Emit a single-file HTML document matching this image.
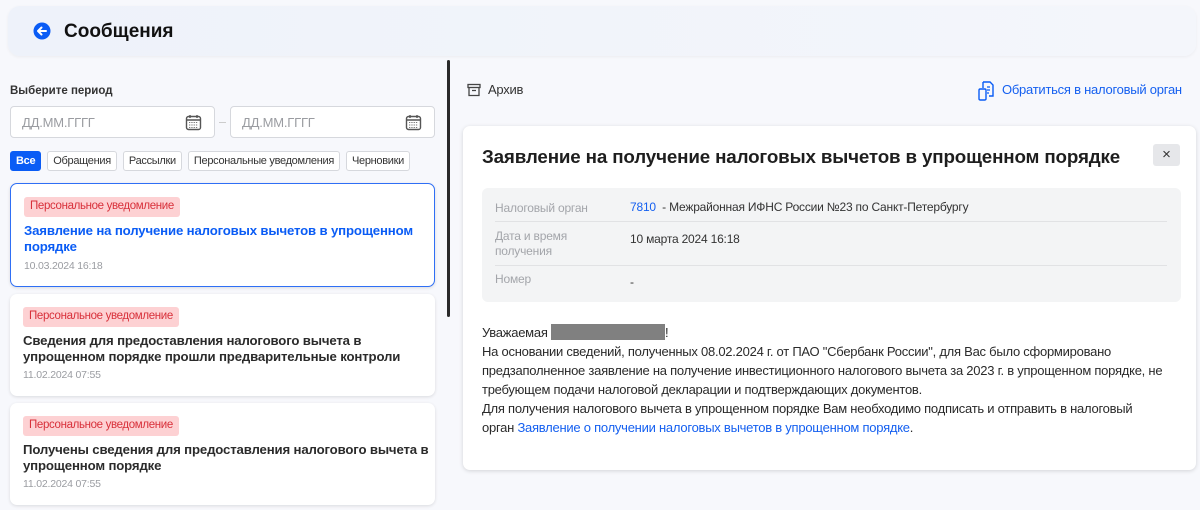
<!DOCTYPE html>
<html><head><meta charset="utf-8"><style>
*{box-sizing:border-box;margin:0;padding:0}
body{width:1200px;height:510px;overflow:hidden;background:#f7f8fc;font-family:"Liberation Sans",sans-serif;position:relative;color:#222}
.a{position:absolute;white-space:nowrap}
.hdr{left:8px;top:6px;width:1188px;height:50px;background:linear-gradient(90deg,#eef2fa,#f4f6fb);border-radius:12px;box-shadow:0 1px 3px rgba(0,0,0,.05)}
.inp{height:32px;width:205px;border:1px solid #d6d8dd;border-radius:4px;background:#fff;top:106px}
.inp span{position:absolute;left:11px;top:8px;font-size:13px;color:#9a9ca1;letter-spacing:-.2px}
.chips{left:10px;top:151px;display:flex;gap:6px}
.chip{height:20px;border:1px solid #d6d8dd;border-radius:3px;background:#fff;font-size:11px;color:#333;padding:3px 5px;letter-spacing:-.3px;white-space:nowrap}
.card{left:10px;width:425px;background:#fff;border-radius:7px;box-shadow:0 1px 3px rgba(0,0,0,.12)}
.tag{position:absolute;left:13px;top:13px;height:20px;background:#fdd1d3;color:#d8303a;font-size:11.5px;padding:3px 6px;border-radius:3px;letter-spacing:-.35px;white-space:nowrap}
.ct{position:absolute;left:13px;top:39px;font-size:13.2px;font-weight:bold;line-height:16px;color:#2b2b2b;letter-spacing:-.15px;white-space:nowrap}
.cd{position:absolute;left:13px;font-size:10.5px;color:#9a9ca1;letter-spacing:-.2px}
.t13{font-size:13px;letter-spacing:-.25px;color:#2a2a2a}
.lbl{font-size:12px;color:#a3a5aa;letter-spacing:-.2px}
</style></head><body>
<div class="a hdr"></div>
<svg class="a" style="left:33px;top:22px" width="18" height="18" viewBox="0 0 18 18"><circle cx="9" cy="9" r="8.5" fill="#0a5cf5"/><path d="M13 9H5.5M8.5 5.5L5 9l3.5 3.5" stroke="#fff" stroke-width="2" fill="none" stroke-linecap="round" stroke-linejoin="round"/></svg>
<div class="a" style="left:64px;top:21px;font-size:19px;font-weight:bold;color:#111">Сообщения</div>

<div class="a" style="left:10px;top:85px;font-size:11.5px;font-weight:bold;color:#333">Выберите период</div>
<div class="a inp" style="left:10px"><span>ДД.ММ.ГГГГ</span>
<svg style="position:absolute;right:12px;top:7px" width="17" height="17" viewBox="0 0 17 17"><rect x="1.5" y="2.5" width="14" height="13" rx="2" fill="none" stroke="#555" stroke-width="1.4"/><path d="M1.5 6h14M5 1v3M12 1v3" stroke="#555" stroke-width="1.4"/><path d="M4 8.5h9M4 11h9M4 13.5h9" stroke="#777" stroke-width="1" stroke-dasharray="1.3 1"/></svg></div>
<div class="a" style="left:219px;top:122px;width:7px;height:1px;background:#ccc"></div>
<div class="a inp" style="left:230px"><span>ДД.ММ.ГГГГ</span>
<svg style="position:absolute;right:12px;top:7px" width="17" height="17" viewBox="0 0 17 17"><rect x="1.5" y="2.5" width="14" height="13" rx="2" fill="none" stroke="#555" stroke-width="1.4"/><path d="M1.5 6h14M5 1v3M12 1v3" stroke="#555" stroke-width="1.4"/><path d="M4 8.5h9M4 11h9M4 13.5h9" stroke="#777" stroke-width="1" stroke-dasharray="1.3 1"/></svg></div>

<div class="a chips">
<div class="chip" style="background:#0a5cf5;border-color:#0a5cf5;color:#fff;font-weight:bold">Все</div>
<div class="chip">Обращения</div>
<div class="chip">Рассылки</div>
<div class="chip">Персональные уведомления</div>
<div class="chip">Черновики</div>
</div>

<div class="a card" style="top:183px;height:104px;border:1.5px solid #2f6ff5">
<div class="tag">Персональное уведомление</div>
<div class="ct" style="color:#0a5cf5">Заявление на получение налоговых вычетов в упрощенном<br>порядке</div>
<div class="cd" style="top:76px">10.03.2024 16:18</div></div>
<div class="a card" style="top:294px;height:102px">
<div class="tag">Персональное уведомление</div>
<div class="ct">Сведения для предоставления налогового вычета в<br>упрощенном порядке прошли предварительные контроли</div>
<div class="cd" style="top:75px">11.02.2024 07:55</div></div>
<div class="a card" style="top:403px;height:102px">
<div class="tag">Персональное уведомление</div>
<div class="ct">Получены сведения для предоставления налогового вычета в<br>упрощенном порядке</div>
<div class="cd" style="top:75px">11.02.2024 07:55</div></div>

<div class="a" style="left:447px;top:60px;width:3px;height:257px;background:#2a2a2a;border-radius:2px"></div>

<svg class="a" style="left:467px;top:83px" width="14" height="14" viewBox="0 0 14 14"><rect x="1" y="1.5" width="12" height="3" fill="none" stroke="#444" stroke-width="1.3"/><path d="M2 4.5v8h10v-8M5 7.5h4" stroke="#444" stroke-width="1.3" fill="none"/></svg>
<div class="a t13" style="left:488px;top:82px;color:#333">Архив</div>
<svg class="a" style="left:977px;top:81px" width="18" height="20" viewBox="0 0 18 20"><path d="M6 1h7l3 3v11h-4M6 1v6" stroke="#0a5cf5" stroke-width="1.4" fill="none"/><rect x="2" y="8" width="7" height="11" rx="1.2" fill="none" stroke="#0a5cf5" stroke-width="1.4"/><path d="M10 6h3M10 9h3M10 12h2" stroke="#0a5cf5" stroke-width="1.2"/></svg>
<div class="a t13" style="left:1002px;top:82px;color:#1560f0">Обратиться в налоговый орган</div>

<div class="a" style="left:463px;top:126px;width:733px;height:344px;background:#fff;border-radius:7px;box-shadow:0 1px 4px rgba(0,0,0,.15)"></div>
<div class="a" style="left:482px;top:146px;font-size:18.8px;font-weight:bold;color:#1e1e1e;letter-spacing:-.15px">Заявление на получение налоговых вычетов в упрощенном порядке</div>
<div class="a" style="left:1153px;top:144px;width:27px;height:22px;background:#e6e7ea;border-radius:3px;text-align:center;font-size:15px;line-height:21px;color:#333">×</div>

<div class="a" style="left:482px;top:188px;width:699px;height:114px;background:#f3f4f5;border-radius:6px"></div>
<div class="a" style="left:495px;top:221px;width:672px;height:1px;background:#e1e2e4"></div>
<div class="a" style="left:495px;top:265px;width:672px;height:1px;background:#e1e2e4"></div>
<div class="a lbl" style="left:495px;top:201px">Налоговый орган</div>
<div class="a" style="left:630px;top:200px;font-size:12px;letter-spacing:-.2px;color:#333"><span style="color:#1560f0">7810</span>&nbsp; - Межрайонная ИФНС России №23 по Санкт-Петербургу</div>
<div class="a lbl" style="left:495px;top:229px;line-height:15px">Дата и время<br>получения</div>
<div class="a" style="left:630px;top:232px;font-size:12px;color:#333;letter-spacing:-.2px">10 марта 2024 16:18</div>
<div class="a lbl" style="left:495px;top:272px">Номер</div>
<div class="a" style="left:630px;top:275px;font-size:12px;color:#333">-</div>

<div class="a t13" style="left:482px;top:323px;line-height:19px">Уважаемая <span style="display:inline-block;width:114px;height:16px;background:#808080;vertical-align:-3px"></span>!<br>На основании сведений, полученных 08.02.2024 г. от ПАО "Сбербанк России", для Вас было сформировано<br>предзаполненное заявление на получение инвестиционного налогового вычета за 2023 г. в упрощенном порядке, не<br>требующем подачи налоговой декларации и подтверждающих документов.<br>Для получения налогового вычета в упрощенном порядке Вам необходимо подписать и отправить в налоговый<br>орган <span style="color:#1560f0">Заявление о получении налоговых вычетов в упрощенном порядке</span>.</div>
</body></html>
